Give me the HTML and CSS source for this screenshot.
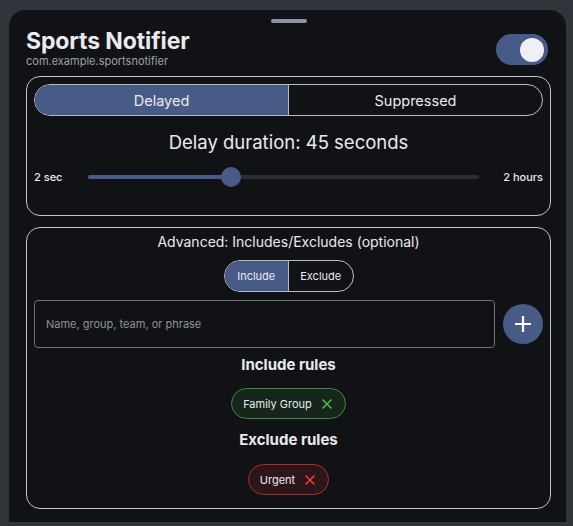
FILE: index.html
```html
<!DOCTYPE html>
<html lang="en">
<head>
    <meta charset="UTF-8">
    <meta name="viewport" content="width=device-width, initial-scale=1.0">
    <title>Sports Notifier</title>
    <link rel="stylesheet" href="styles.css">
</head>
<body>

    <div class="sheet">
        <div class="handle"></div>

        <!-- App header -->
        <div class="app-header">
            <div>
                <div class="app-title">Sports Notifier</div>
                <div class="app-package">com.example.sportsnotifier</div>
            </div>
            <div class="toggle on"><span class="thumb"></span></div>
        </div>

        <!-- Mode + delay -->
        <div class="card">
            <div class="segmented wide">
                <div class="seg active">Delayed</div>
                <div class="seg">Suppressed</div>
            </div>
            <div class="delay-label">Delay duration: 45 seconds</div>
            <div class="slider-row">
                <span class="slider-end">2 sec</span>
                <div class="slider">
                    <div class="slider-fill" style="width: 36.4%"></div>
                    <div class="slider-thumb" style="left: 36.4%"></div>
                </div>
                <span class="slider-end">2 hours</span>
            </div>
        </div>

        <!-- Includes / Excludes -->
        <div class="card advanced">
            <div class="section-title">Advanced: Includes/Excludes (optional)</div>
            <div class="segmented small">
                <div class="seg active">Include</div>
                <div class="seg">Exclude</div>
            </div>
            <div class="input-row">
                <input type="text" class="rule-input" placeholder="Name, group, team, or phrase">
                <button class="add-btn">
                    <svg width="18" height="18" viewBox="0 0 18 18"><path d="M9 1v16M1 9h16" stroke="#fff" stroke-width="2.2"/></svg>
                </button>
            </div>

            <div class="rules-title">Include rules</div>
            <div class="chip include">
                Family Group
                <svg width="12" height="12" viewBox="0 0 12 12"><path d="M1.5 1.5l9 9M10.5 1.5l-9 9" stroke="currentColor" stroke-width="1.6"/></svg>
            </div>

            <div class="rules-title">Exclude rules</div>
            <div class="chip exclude">
                Urgent
                <svg width="12" height="12" viewBox="0 0 12 12"><path d="M1.5 1.5l9 9M10.5 1.5l-9 9" stroke="currentColor" stroke-width="1.6"/></svg>
            </div>
        </div>
    </div>

</body>
</html>
```

FILE: styles.css
```css
/* General Styling */
body {
    font-family: 'Inter', 'DejaVu Sans', sans-serif;
    margin: 0;
    padding: 0;
    background: #30343b;
    color: #e9eaee;
}

/* Bottom sheet */
.sheet {
    box-sizing: border-box;
    margin: 10px 0 0 9px;
    width: 557px;
    height: 512px;
    padding: 0 15px 0 17px;
    background: #111216;
    border-radius: 16px 16px 0 0;
    overflow: hidden;
}

.handle {
    width: 36px;
    height: 4px;
    margin: 9px auto 0;
    border-radius: 2px;
    background: #8c94a4;
}

/* Header */
.app-header {
    display: flex;
    justify-content: space-between;
    align-items: flex-start;
    padding: 5px 3px 0 0;
    height: 53px;
    box-sizing: border-box;
}

.app-title {
    font-size: 23px;
    font-weight: 700;
    line-height: 26px;
    letter-spacing: -0.1px;
}

.app-package {
    font-size: 11px;
    line-height: 14px;
    color: #9da1a9;
}

.toggle {
    width: 52px;
    height: 31px;
    margin-top: 6px;
    border-radius: 16px;
    background: #485b87;
    position: relative;
}

.toggle .thumb {
    position: absolute;
    top: 4px;
    right: 4px;
    width: 24px;
    height: 24px;
    border-radius: 50%;
    background: #eef0f5;
}

/* Cards */
.card {
    border: 1px solid #c3c5cb;
    border-radius: 14px;
    padding: 7px 7px 28px;
    height: 140px;
    box-sizing: border-box;
}

.card.advanced {
    margin-top: 11px;
    height: 282px;
    padding: 5px 7px 0;
    display: flex;
    flex-direction: column;
    align-items: center;
}

/* Segmented buttons */
.segmented {
    display: flex;
    border: 1px solid #b9bcc5;
    border-radius: 16px;
    overflow: hidden;
    box-sizing: border-box;
    height: 32px;
}

.seg {
    flex: 1;
    display: flex;
    align-items: center;
    justify-content: center;
    font-size: 14.5px;
    color: #e9eaee;
}

.seg + .seg {
    border-left: 1px solid #b9bcc5;
}

.seg.active {
    background: #485b87;
}

.segmented.small {
    width: 130px;
    margin-top: 9px;
}

.segmented.small .seg {
    font-size: 11px;
}

/* Delay slider */
.delay-label {
    margin-top: 14px;
    text-align: center;
    font-size: 18.5px;
    line-height: 24px;
}

.slider-row {
    display: flex;
    align-items: center;
    margin-top: 13px;
    height: 20px;
}

.slider-end {
    font-size: 11px;
    font-weight: 500;
}

.slider {
    flex: 1;
    position: relative;
    height: 4px;
    margin: 0 24px 0 26px;
    border-radius: 2px;
    background: #2a2d34;
}

.slider-fill {
    height: 100%;
    border-radius: 2px;
    background: #485b87;
}

.slider-thumb {
    position: absolute;
    top: -8px;
    width: 20px;
    height: 20px;
    margin-left: -10px;
    border-radius: 50%;
    background: #485b87;
}

/* Advanced section */
.section-title {
    font-size: 14px;
    line-height: 18px;
}

.input-row {
    align-self: stretch;
    display: flex;
    align-items: center;
    gap: 8px;
    margin-top: 8px;
}

.rule-input {
    flex: 1;
    height: 48px;
    box-sizing: border-box;
    background: transparent;
    border: 1px solid #6e727a;
    border-radius: 4px;
    padding: 0 11px;
    font-family: inherit;
    font-size: 11px;
    color: #e9eaee;
    outline: none;
}

.rule-input::placeholder {
    color: #8e9299;
}

.add-btn {
    width: 40px;
    height: 40px;
    border: none;
    border-radius: 50%;
    background: #485b87;
    display: flex;
    align-items: center;
    justify-content: center;
    padding: 0;
}

.rules-title {
    margin-top: 7px;
    font-size: 15px;
    font-weight: 700;
    line-height: 20px;
}

.chip {
    display: flex;
    align-items: center;
    gap: 9px;
    height: 31px;
    box-sizing: border-box;
    margin-top: 13px;
    padding: 0 12px 0 11px;
    border-radius: 16px;
    font-size: 11px;
}

.chip + .rules-title {
    margin-top: 11px;
}

.chip.include {
    border: 1px solid #3c8a3e;
    background: #17261a;
    color: #e9eaee;
}

.chip.include svg { color: #4cb552; }

.chip.exclude {
    margin-top: 14px;
    border: 1px solid #a8302c;
    background: #2d1619;
}

.chip.exclude svg { color: #e8413a; }
```
